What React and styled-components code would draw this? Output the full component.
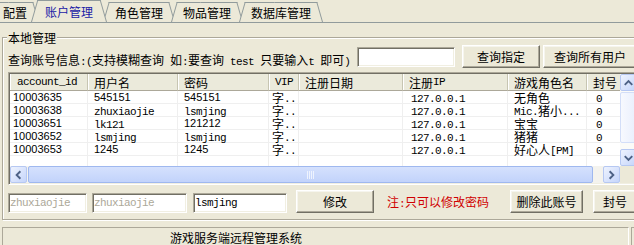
import React from 'react'
import styled, { createGlobalStyle } from 'styled-components'

const GlobalStyle = createGlobalStyle`
  html, body {
    margin: 0;
    padding: 0;
    overflow: hidden;
    background: #ece9d8;
  }
  body {
    font-family: "Noto Sans CJK SC", "Liberation Sans", sans-serif;
    font-size: 12px;
    color: #000;
  }
`

const Window = styled.div`
  width: 646px;
  height: 245px;
  display: flex;
  flex-direction: column;
  background: #ece9d8;
`

// ---- tabs ----

const TabStrip = styled.div`
  display: flex;
  align-items: flex-end;
  height: 22px;
  border-bottom: 1px solid #919b9c;
`

const Tab = styled.div`
  position: relative;
  z-index: ${p => p.$z};
  height: ${p => (p.$active ? 22 : 20)}px;
  margin-left: ${p => p.$shift}px;
  padding: 0 ${p => (p.$active ? 14 : 12)}px;
  display: flex;
  align-items: center;
  line-height: 13px;
  color: ${p => (p.$active ? '#1a1aa6' : '#000')};

  &::before,
  &::after {
    content: '';
    position: absolute;
    top: 0;
    bottom: 0;
    width: 50%;
    z-index: -1;
    background: #ece9d8;
    border-top: 1px solid #919b9c;
    transform-origin: bottom;
  }
  &::before {
    left: 0;
    border-left: 1px solid #919b9c;
    transform: skewX(-16deg);
  }
  &::after {
    right: 0;
    border-right: 1px solid #919b9c;
    transform: skewX(16deg);
  }
`

// ---- group box ----

const Page = styled.div`
  padding: 8px 2px 0 2px;
`

const Group = styled.fieldset`
  margin: 0;
  padding: 0 4px 6px 5px;
  border: 1px solid #aca899;
  box-shadow: inset 1px 1px 0 #fff, 1px 1px 0 #fff;
  min-width: 0;
`

const Legend = styled.legend`
  padding: 0 1px;
  margin-left: -1px;
  line-height: 13px;
  background: #ece9d8;
`

// half-width latin runs, the way the old bitmap font sets them
const Half = styled.span`
  font-family: "Liberation Mono", monospace;
  font-size: 11px;
  letter-spacing: -0.6px;
  line-height: 1;
  white-space: pre;
  vertical-align: ${p => p.$raise || 0}px;
`

function Txt ({ children, raise }) {
  return String(children)
    .split(/([\x20-\x7e]+)/)
    .filter(Boolean)
    .map((part, i) => (/^[\x20-\x7e]+$/.test(part)
      ? <Half key={i} $raise={raise}>{part}</Half>
      : part))
}

const SearchRow = styled.div`
  margin-top: 1px;
  height: 23px;
  display: flex;
  align-items: flex-end;
`

const Label = styled.div`
  width: ${p => p.$w}px;
  flex: none;
  line-height: 17px;
  white-space: nowrap;
  color: ${p => p.$color || '#000'};
  align-self: ${p => (p.$center ? 'center' : 'flex-end')};
  margin-left: ${p => p.$ml || 0}px;
`

const Field = styled.input`
  box-sizing: border-box;
  flex: none;
  width: ${p => p.$w}px;
  height: 20px;
  margin: 0 0 ${p => p.$mb || 0}px ${p => p.$ml || 0}px;
  padding: 0 0 0 1px;
  border: 1px solid;
  border-color: #aca899 #fff #fff #aca899;
  box-shadow: inset 1px 1px 0 #716f64, inset -1px -1px 0 #f1efe2;
  background: #fff;
  outline: none;
  font-family: "Liberation Mono", monospace;
  font-size: 11px;
  letter-spacing: -0.6px;
  color: ${p => (p.$dim ? '#aca899' : '#000')};
`

const Button = styled.button`
  box-sizing: border-box;
  flex: none;
  width: ${p => p.$w}px;
  height: 23px;
  margin: 0 0 0 ${p => p.$ml || 0}px;
  padding: 0;
  border: 1px solid;
  border-color: #fff #716f64 #716f64 #fff;
  box-shadow: inset -1px -1px 0 #aca899, inset 1px 1px 0 #f6f5ee;
  background: #ece9d8;
  font-family: "Noto Sans CJK SC", sans-serif;
  font-size: 12px;
  line-height: 13px;
  color: #000;
`

// ---- list view ----

const ListView = styled.div`
  margin-top: 4px;
  height: 113px;
  box-sizing: border-box;
  display: grid;
  grid-template-columns: minmax(0, 1fr) 17px;
  grid-template-rows: minmax(0, 1fr) 17px;
  border: 1px solid;
  border-color: #aca899 #fff #fff #aca899;
  padding: 1px;
  box-shadow: inset 1px 1px 0 #716f64, inset -1px -1px 0 #f1efe2;
  background: #fff;
`

const Viewport = styled.div`
  overflow: hidden;
`

const Table = styled.div`
  display: grid;
  grid-template-columns: 78px 90px 91px 30px 104px 105px 79px 80px;
  grid-template-rows: 17px repeat(5, 13px) minmax(0, 1fr);
  height: 100%;
  width: 657px;
`

const HeadCell = styled.div`
  box-sizing: border-box;
  padding-left: ${p => (p.$first ? 7 : 6)}px;
  display: flex;
  align-items: center;
  background: #ebeadb;
  border-right: 1px solid #c7c5b2;
  border-bottom: 1px solid #aca899;
  box-shadow: inset 1px 0 0 #fff;
  white-space: nowrap;
  overflow: hidden;
  line-height: 13px;
`

const Cell = styled.div`
  box-sizing: border-box;
  padding-left: ${p => p.$pad || 0}px;
  box-shadow: inset -1px 0 0 #efefef${p => (p.$filler ? '' : ', inset 0 -1px 0 #efefef')};
  white-space: nowrap;
  overflow: hidden;
  line-height: 13px;
  font-family: ${p => (p.$sans ? '"Liberation Sans", Arial, sans-serif' : 'inherit')};
  font-size: ${p => (p.$sans ? 11 : 12)}px;
`

const VScroll = styled.div`
  display: flex;
  flex-direction: column;
  background: #fbfbf8;
`

const HScroll = styled.div`
  display: flex;
  align-items: stretch;
  background: #f4f3ee;
`

const Corner = styled.div`
  background: #ece9d8;
`

const ArrowBtn = styled.div`
  box-sizing: border-box;
  flex: none;
  width: 17px;
  height: 17px;
  display: flex;
  align-items: center;
  justify-content: center;
  border: 1px solid #b6c8f2;
  border-radius: 2px;
  background: linear-gradient(135deg, #eef3fe 0%, #c5d5fb 100%);
`

const Track = styled.div`
  flex: 1;
  display: flex;
  flex-direction: ${p => (p.$vertical ? 'column' : 'row')};
  padding: ${p => (p.$vertical ? '1px 0 6px' : '0 10px 0 1px')};
`

const Thumb = styled.div`
  box-sizing: border-box;
  flex: 1;
  display: flex;
  align-items: center;
  justify-content: center;
  border: 1px solid ${p => (p.$pale ? '#d3def8' : '#9fb8ef')};
  border-radius: 2px;
  background: ${p => (p.$pale ? 'linear-gradient(90deg, #f7f9fe, #e9effd)' : 'linear-gradient(180deg, #d5e1fd 0%, #c2d3fb 100%)')};
`

const Chevron = ({ dir }) => {
  const pts = {
    up: '4,10 8,6 12,10',
    down: '4,6 8,10 12,6',
    left: '10,4 6,8 10,12',
    right: '6,4 10,8 6,12'
  }[dir]
  return (
    <svg width="16" height="16" viewBox="0 0 16 16">
      <polyline points={pts} fill="none" stroke="#4d6185" strokeWidth="2" />
    </svg>
  )
}

const Grip = () => (
  <svg width="8" height="8" viewBox="0 0 8 8">
    {[0, 2, 4, 6].map(x => (
      <line key={x} x1={x + 0.5} y1="0" x2={x + 0.5} y2="8" stroke="#eef3fe" strokeWidth="1" />
    ))}
  </svg>
)

// ---- bottom edit row ----

const EditRow = styled.div`
  margin-top: 5px;
  height: 23px;
  display: flex;
  align-items: flex-end;
`

// ---- status bar ----

const StatusBar = styled.div`
  margin-top: 7px;
  flex: 1;
  display: flex;
  gap: 2px;
  padding-left: 2px;
`

const StatusPanel = styled.div`
  box-sizing: border-box;
  flex: ${p => (p.$w ? `0 0 ${p.$w}px` : 1)};
  border: 1px solid;
  border-color: #aca899 #fff #fff #aca899;
  padding-left: ${p => p.$indent || 0}px;
  line-height: 20px;
  white-space: nowrap;
`

const tabs = ['配置', '账户管理', '角色管理', '物品管理', '数据库管理']
const columns = ['account_id', '用户名', '密码', 'VIP', '注册日期', '注册IP', '游戏角色名', '封号']
const colPad = [3, 6, 6, 3, 6, 8, 6, 9]
const rows = [
  ['10003635', '545151', '545151', '字..', '', '127.0.0.1', '无角色', '0'],
  ['10003638', 'zhuxiaojie', 'lsmjing', '字..', '', '127.0.0.1', 'Mic.猪小...', '0'],
  ['10003651', 'lk121', '121212', '字..', '', '127.0.0.1', '宝宝', '0'],
  ['10003652', 'lsmjing', 'lsmjing', '字..', '', '127.0.0.1', '猪猪', '0'],
  ['10003653', '1245', '1245', '字..', '', '127.0.0.1', '好心人[PM]', '0']
]

const isNumber = v => /^\d{2,}$/.test(v)

export default function App () {
  const active = 1
  return (
    <Window>
      <GlobalStyle />
      <TabStrip>
        {tabs.map((t, i) => (
          <Tab
            key={t}
            $active={i === active}
            $z={i === active ? 10 : i + 1}
            $shift={i === 0 ? -9 : i === active ? -8 : -4}
          >
            {t}
          </Tab>
        ))}
      </TabStrip>

      <Page>
        <Group>
          <Legend>本地管理</Legend>

          <SearchRow>
            <Label $w={349}>
              <Txt>查询账号信息:(支持模糊查询 如:要查询 test 只要输入t 即可)</Txt>
            </Label>
            <Field $w={98} $mb={1} defaultValue="" />
            <Button $w={78} $ml={7}>查询指定</Button>
            <Button $w={94} $ml={3}>查询所有用户</Button>
          </SearchRow>

          <ListView>
            <Viewport>
              <Table>
                {columns.map((c, i) => (
                  <HeadCell key={c} $first={i === 0}><Txt>{c}</Txt></HeadCell>
                ))}
                {rows.map((r, ri) =>
                  r.map((v, ci) => (
                    <Cell key={`${ri}-${ci}`} $pad={colPad[ci]} $sans={isNumber(v)}>
                      {isNumber(v) ? v : <Txt raise={1}>{v}</Txt>}
                    </Cell>
                  ))
                )}
                {columns.map(c => (
                  <Cell key={`f-${c}`} $filler />
                ))}
              </Table>
            </Viewport>
            <VScroll>
              <ArrowBtn><Chevron dir="up" /></ArrowBtn>
              <Track $vertical>
                <Thumb $pale />
              </Track>
              <ArrowBtn><Chevron dir="down" /></ArrowBtn>
            </VScroll>
            <HScroll>
              <ArrowBtn><Chevron dir="left" /></ArrowBtn>
              <Track>
                <Thumb><Grip /></Thumb>
              </Track>
              <ArrowBtn><Chevron dir="right" /></ArrowBtn>
            </HScroll>
            <Corner />
          </ListView>

          <EditRow>
            <Field $w={79} $dim readOnly defaultValue="zhuxiaojie" />
            <Field $w={95} $ml={5} $dim readOnly defaultValue="zhuxiaojie" />
            <Field $w={94} $ml={6} defaultValue="lsmjing" />
            <Button $w={78} $ml={9}>修改</Button>
            <Label $w={123} $ml={13} $center $color="#d00000">
              <Txt>注:只可以修改密码</Txt>
            </Label>
            <Button $w={73}>删除此账号</Button>
            <Button $w={44} $ml={10}>封号</Button>
          </EditRow>
        </Group>
      </Page>

      <StatusBar>
        <StatusPanel $w={627} $indent={167}>游戏服务端远程管理系统</StatusPanel>
        <StatusPanel />
      </StatusBar>
    </Window>
  )
}
